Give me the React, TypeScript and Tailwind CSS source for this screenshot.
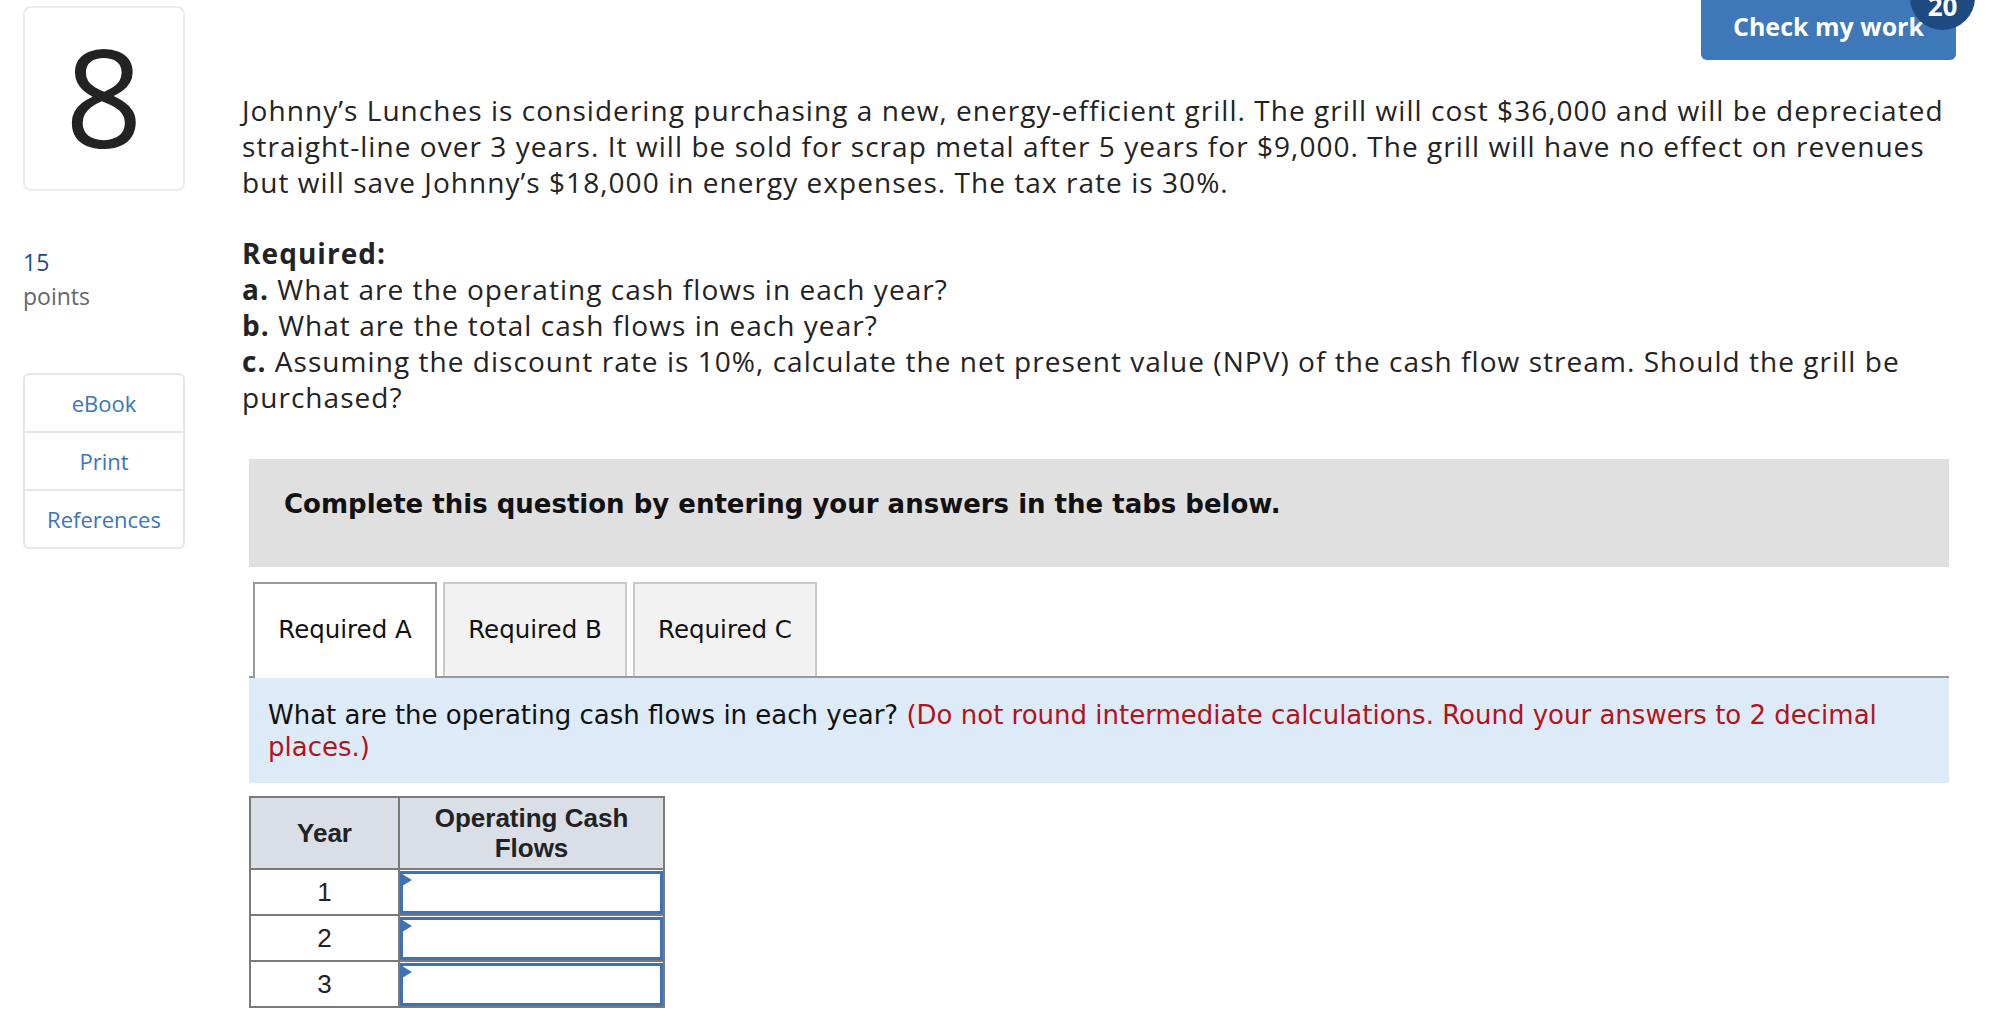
import React from "react";

const links = ["eBook", "Print", "References"];
const years = [1, 2, 3];

function Tab({ label, active }: { label: string; active?: boolean }) {
  return active ? (
    <div className="relative z-10 -mb-[2px] flex h-[96px] w-[184px] items-center justify-center border-2 border-b-0 border-[#999] bg-white pb-[2px]">
      {label}
    </div>
  ) : (
    <div className="flex h-[94px] w-[184px] items-center justify-center border-2 border-b-0 border-[#c9c9c9] bg-[#f2f2f2]">
      {label}
    </div>
  );
}

export default function App() {
  return (
    <div className="flex min-h-screen bg-white font-['Open_Sans',sans-serif] text-[#232323]">
      <aside className="ml-[23px] mt-[6px] w-[162px] shrink-0">
        <div className="flex h-[185px] items-center justify-center rounded-[8px] border-2 border-[#ececec] pb-[6px] text-[136px] leading-none">
          8
        </div>
        <div className="mt-[54px] text-[23px] leading-[34px]">
          <div className="text-[#1b4a8a]">15</div>
          <div className="text-[#666]">points</div>
        </div>
        <div className="mt-[60px] rounded-[6px] border-2 border-[#e6e6e6] text-[22px] text-[#3a75b9]">
          {links.map((l, i) => (
            <div
              key={l}
              className={
                i === 0
                  ? "flex h-[56px] items-center justify-center"
                  : "flex h-[58px] items-center justify-center border-t-2 border-[#e6e6e6]"
              }
            >
              {l}
            </div>
          ))}
        </div>
      </aside>

      <main className="ml-[57px] w-[1714px]">
        <div className="flex h-[60px] justify-end">
          <button className="relative h-[60px] w-[255px] rounded-b-[6px] bg-[#3e78b8] pb-[6px] text-[25px] font-bold text-white">
            Check my work
            <span className="absolute -right-[19px] -top-[35px] flex h-[65px] w-[65px] items-center justify-center rounded-full bg-[#1d4a80] pt-[17px] text-[26px] leading-[26px]">
              20
            </span>
          </button>
        </div>

        <p className="mt-[32px] whitespace-nowrap text-[28px] leading-[36px] tracking-[1.05px]">
          Johnny’s Lunches is considering purchasing a new, energy-efficient grill. The grill will cost $36,000 and will be depreciated
          <br />
          straight-line over 3 years. It will be sold for scrap metal after 5 years for $9,000. The grill will have no effect on revenues
          <br />
          but will save Johnny’s $18,000 in energy expenses. The tax rate is 30%.
        </p>

        <div className="mt-[35px] whitespace-nowrap text-[28px] leading-[36px] tracking-[1.05px]">
          <div className="font-bold">Required:</div>
          <div>
            <span className="font-bold">a.</span> What are the operating cash flows in each year?
          </div>
          <div>
            <span className="font-bold">b.</span> What are the total cash flows in each year?
          </div>
          <div>
            <span className="font-bold">c.</span> Assuming the discount rate is 10%, calculate the net present value (NPV) of the cash flow stream. Should the grill be
            <br />
            purchased?
          </div>
        </div>

        <div className="ml-[7px] w-[1700px] font-['DejaVu_Sans',sans-serif] text-[#111]">
          <div className="mt-[44px] h-[108px] bg-[#e0e0e0] pl-[35px] pt-[30px] text-[26px] font-bold leading-[30px]">
            Complete this question by entering your answers in the tabs below.
          </div>

          <div className="mt-[15px] flex items-end gap-[6px] border-b-2 border-[#999] pl-[4px] text-[24.5px]">
            <Tab label="Required A" active />
            <Tab label="Required B" />
            <Tab label="Required C" />
          </div>

          <div className="bg-[#dcebf7] pb-[20px] pl-[19px] pt-[21px] text-[26px] leading-[32px]">
            What are the operating cash flows in each year?{" "}
            <span className="text-[#b5121b]">
              (Do not round intermediate calculations. Round your answers to 2 decimal
              <br />
              places.)
            </span>
          </div>

          <table className="mt-[13px] border-collapse border-2 border-[#7a7a7a] font-['Liberation_Sans',Arial,sans-serif] text-[26px] text-[#222]">
            <thead>
              <tr className="h-[72px] bg-[#d9dee7] font-bold leading-[30px]">
                <th className="w-[149px] border-2 border-[#7a7a7a]">Year</th>
                <th className="w-[265px] border-2 border-[#7a7a7a]">
                  Operating Cash
                  <br />
                  Flows
                </th>
              </tr>
            </thead>
            <tbody>
              {years.map((y) => (
                <tr key={y} className="h-[46px]">
                  <td className="border-2 border-[#7a7a7a] text-center">{y}</td>
                  <td className="border-2 border-[#7a7a7a] p-0">
                    <div className="relative h-[43px] border-[3px] border-[#3d72b5] bg-white">
                      <span className="absolute left-[-1px] top-[0px] h-0 w-0 border-y-[6px] border-l-[10px] border-y-transparent border-l-[#3d72b5]" />
                    </div>
                  </td>
                </tr>
              ))}
            </tbody>
          </table>
        </div>
      </main>
    </div>
  );
}
